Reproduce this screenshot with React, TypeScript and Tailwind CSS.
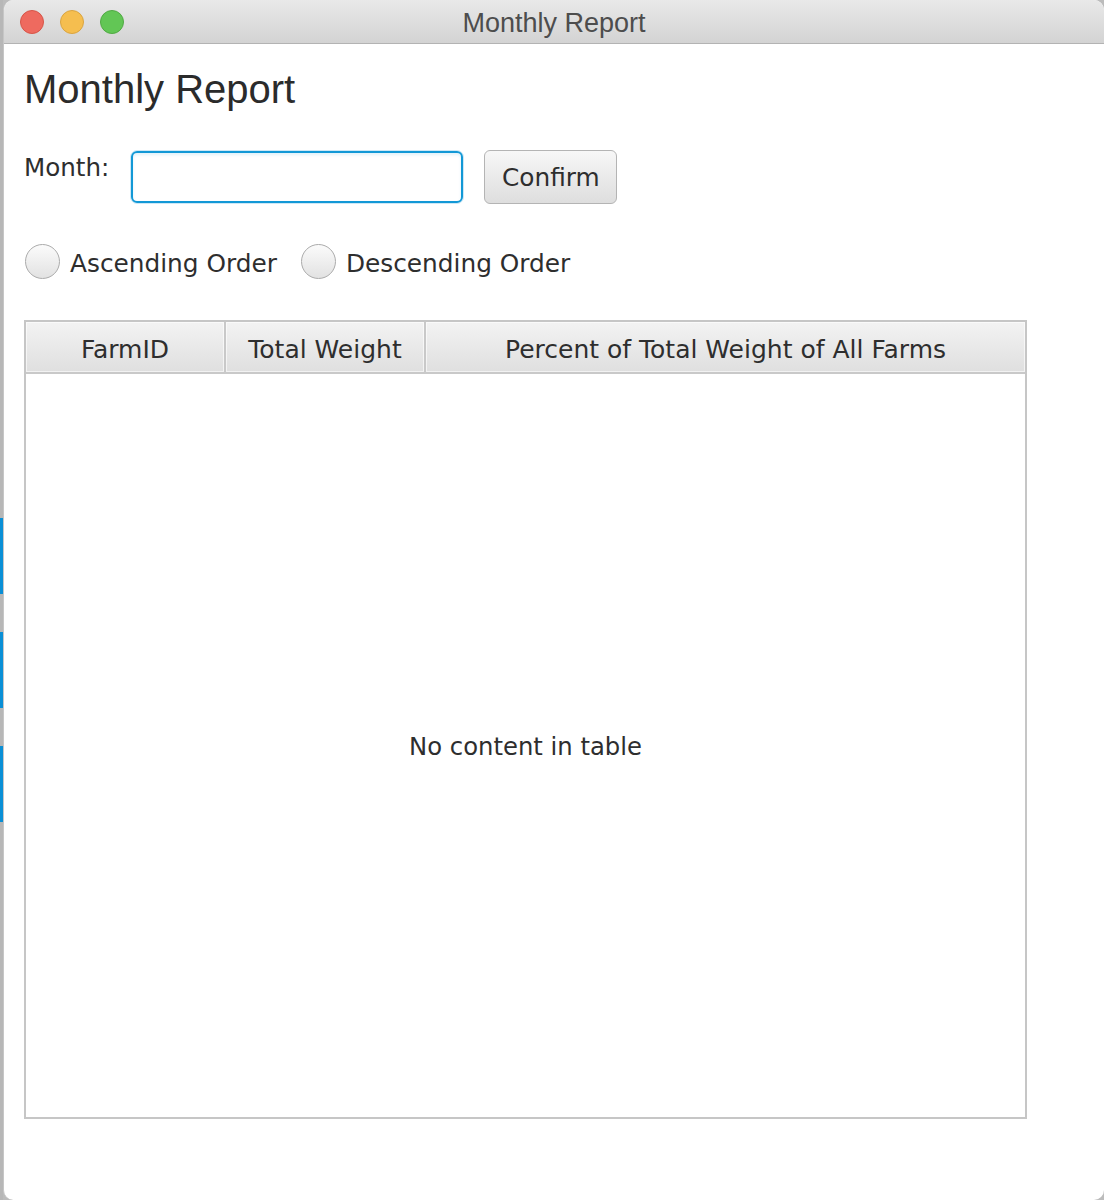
import React from "react";

const columns = [
  { label: "FarmID", width: "w-[200px]" },
  { label: "Total Weight", width: "w-[200px]" },
  { label: "Percent of Total Weight of All Farms", width: "flex-1" },
];

function TrafficLights() {
  return (
    <div className="flex items-center gap-[16px] pl-[16px]">
      <div className="h-[24px] w-[24px] rounded-full bg-[#ee6a5f] border border-[#d65548]" />
      <div className="h-[24px] w-[24px] rounded-full bg-[#f5be4f] border border-[#d9a441]" />
      <div className="h-[24px] w-[24px] rounded-full bg-[#62c655] border border-[#51a944]" />
    </div>
  );
}

function Radio({ label }: { label: string }) {
  return (
    <label className="flex items-center gap-[10px]">
      <span className="h-[35px] w-[35px] rounded-full border-[1.5px] border-[#ababab] bg-gradient-to-b from-[#fbfbfb] to-[#e2e2e2]" />
      <span className="pt-[4px] text-[24.8px] leading-[28px] text-[#2e2e2e]">{label}</span>
    </label>
  );
}

export default function App() {
  return (
    <div className="flex h-[1200px] w-[1104px] bg-[#bcbcbc] font-['DejaVu_Sans',sans-serif]">
      {/* background window peeking at the left edge */}
      <div className="flex w-[3px] flex-col bg-[#b7b7b7]">
        <div className="h-[518px]" />
        <div className="h-[76px] bg-[#0a8fd6]" />
        <div className="h-[38px]" />
        <div className="h-[76px] bg-[#0a8fd6]" />
        <div className="h-[38px]" />
        <div className="h-[76px] bg-[#0a8fd6]" />
      </div>

      <div className="flex flex-1 flex-col overflow-hidden rounded-[10px] border-l border-[#c6c6c6] bg-white">
        {/* title bar */}
        <div className="relative flex h-[44px] shrink-0 items-center border-b border-[#b3b3b3] bg-gradient-to-b from-[#e9e9e9] to-[#d3d3d3]">
          <TrafficLights />
          <div className="absolute inset-0 flex items-center justify-center pt-[4px] font-['Liberation_Sans',sans-serif] text-[27px] text-[#4d4d4d]">
            Monthly Report
          </div>
        </div>

        <div className="flex flex-col pl-[20px]">
          <h1 className="mt-[22px] font-['Liberation_Sans',sans-serif] text-[40px] leading-[46px] text-[#2b2b2b]">
            Monthly Report
          </h1>

          {/* month row */}
          <div className="mt-[38px] flex items-start">
            <span className="mt-[4px] text-[24.6px] leading-[28px] text-[#2e2e2e]">Month:</span>
            <div className="ml-[21px] rounded-[7px] border border-[#cde8f6]">
              <input
                className="block h-[52px] w-[332px] rounded-[6px] border-2 border-[#1298d6] bg-white px-2 text-[24px] shadow-[inset_0_2px_3px_rgba(18,152,214,0.12)] outline-none"
                defaultValue=""
              />
            </div>
            <button className="ml-[20px] h-[54px] w-[133px] rounded-[6px] border border-[#b4b4b4] bg-gradient-to-b from-[#f7f7f7] to-[#dedede] pt-[2px] text-[24.8px] text-[#2e2e2e]">
              Confirm
            </button>
          </div>

          {/* sort order */}
          <div className="mt-[40px] flex items-center gap-[24px] pl-[1px]">
            <Radio label="Ascending Order" />
            <Radio label="Descending Order" />
          </div>

          {/* table */}
          <div className="mt-[41px] flex h-[799px] w-[1003px] flex-col border-2 border-[#c6c6c6]">
            <div className="flex h-[52px] shrink-0 border-b-2 border-[#c9c9c9]">
              {columns.map((col, i) => (
                <div
                  key={col.label}
                  className={`${col.width} flex items-center justify-center bg-gradient-to-b from-[#f3f3f3] to-[#dfdfdf] pt-[5px] shadow-[inset_0_0_0_1px_rgba(255,255,255,0.6)] text-[25px] text-[#2e2e2e] ${
                    i < columns.length - 1 ? "border-r-2 border-[#c9c9c9]" : ""
                  }`}
                >
                  {col.label}
                </div>
              ))}
            </div>
            <div className="flex flex-1 items-center justify-center pt-[3px] text-[24.3px] text-[#2e2e2e]">
              No content in table
            </div>
          </div>
        </div>
      </div>
    </div>
  );
}
